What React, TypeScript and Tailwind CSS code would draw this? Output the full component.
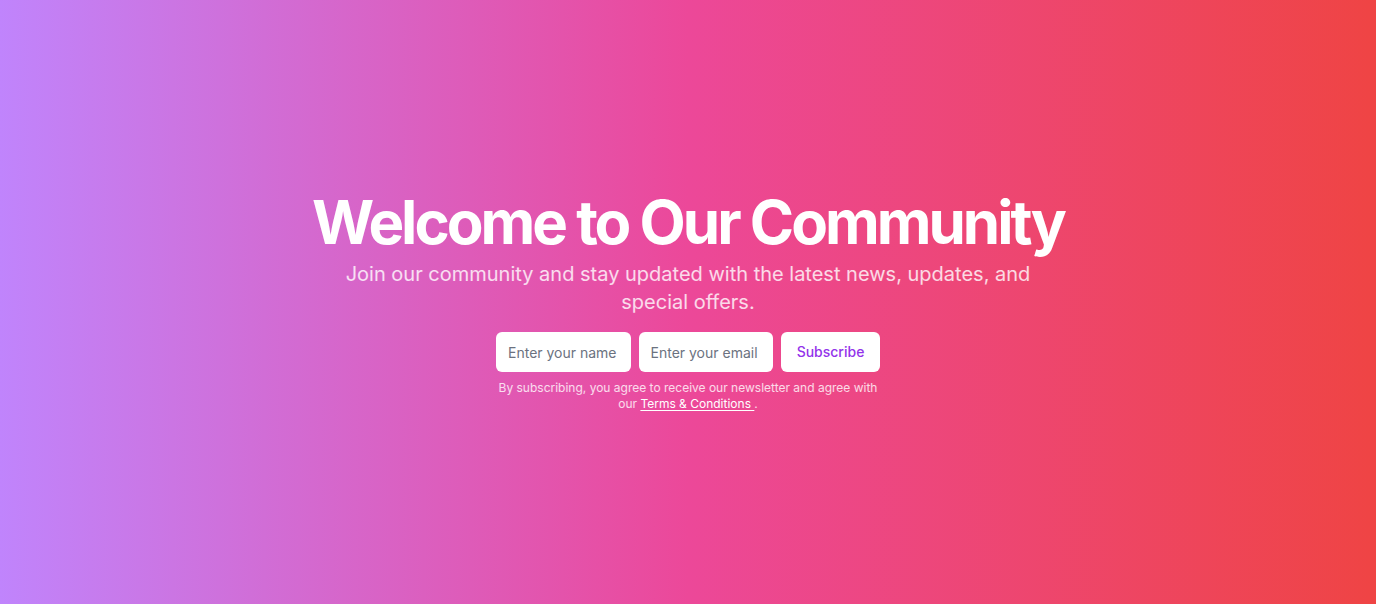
export default function App() {
  return (
    <div
      className="flex h-screen w-full items-center justify-center bg-[linear-gradient(to_right,#c084fc,#ec4899,#ef4444)] px-4"
      style={{ fontFamily: "Inter, 'Noto Sans', sans-serif" }}
    >
      <div className="flex flex-col items-center space-y-4 text-center">
        <div className="space-y-2">
          <h1 className="text-6xl/none font-bold tracking-tighter text-white">
            Welcome to Our Community
          </h1>
          <p className="mx-auto max-w-[700px] text-xl text-white/80">
            Join our community and stay updated with the latest news, updates, and special offers.
          </p>
        </div>
        <div className="w-full max-w-sm space-y-2">
          <form className="flex space-x-2" onSubmit={(e) => e.preventDefault()}>
            <input
              className="h-10 min-w-0 flex-1 rounded-md bg-white px-3 py-2 text-sm text-gray-900 placeholder:text-[#6b7280] outline-none"
              placeholder="Enter your name"
              type="text"
            />
            <input
              className="h-10 min-w-0 flex-1 rounded-md bg-white px-3 py-2 text-sm text-gray-900 placeholder:text-[#6b7280] outline-none"
              placeholder="Enter your email"
              type="email"
            />
            <button
              type="submit"
              className="h-10 w-[99px] rounded-md bg-white text-sm font-medium text-[#9333ea]"
            >
              Subscribe
            </button>
          </form>
          <p className="text-xs text-white/80">
            By subscribing, you agree to receive our newsletter and agree with our{" "}
            <a className="text-white underline underline-offset-2" href="#">
              Terms &amp; Conditions{" "}
            </a>
            .
          </p>
        </div>
      </div>
    </div>
  );
}
